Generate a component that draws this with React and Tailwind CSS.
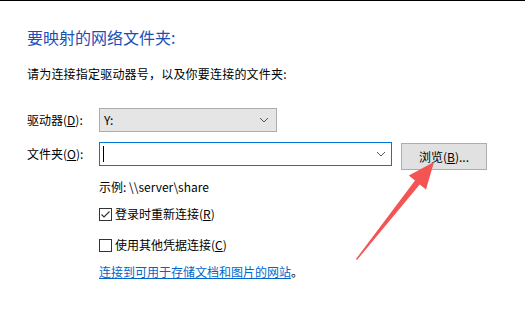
import React from 'react';

const Chevron = () => (
  <svg width="10" height="6" viewBox="0 0 10 6" className="shrink-0">
    <path d="M1 1 L5 5 L9 1" fill="none" stroke="#555" strokeWidth="1" />
  </svg>
);

const Checkbox = ({ checked }) => (
  <svg width="13" height="13" viewBox="0 0 13 13" className="shrink-0">
    <rect x="0.5" y="0.5" width="12" height="12" fill="#fff" stroke="#333" />
    {checked && (
      <path d="M2.5 6.5 L5 9 L10.5 3.5" fill="none" stroke="#333" strokeWidth="1.2" />
    )}
  </svg>
);

// red annotation arrow pointing at the browse button
const Arrow = () => (
  <svg
    width="525"
    height="321"
    viewBox="0 0 525 321"
    className="absolute left-0 top-0 pointer-events-none"
  >
    <polygon
      points="356,258 415,179.6 408.8,174.6 434,161 426,188.4 419.7,183.4 357,259"
      fill="#f45454"
    />
  </svg>
);

export default function App() {
  return (
    <div
      className="relative w-[525px] h-[321px] overflow-hidden bg-white border-t border-black text-[#000] text-[12px]"
      style={{ fontFamily: '"Microsoft YaHei", "Noto Sans CJK SC", "Noto Sans", sans-serif' }}
    >
      <div className="flex flex-col px-[27px]">
        <h1 className="mt-[26px] text-[16px] leading-[20px] text-[#1c4fb5]">要映射的网络文件夹:</h1>
        <p className="mt-[19px] leading-[16px] tracking-[0.2px]">请为连接指定驱动器号，以及你要连接的文件夹:</p>

        <div className="mt-[26px] flex items-center">
          <span className="w-[72px] leading-[16px]">
            驱动器(<u>D</u>):
          </span>
          <div className="flex h-[24px] w-[178px] items-center justify-between border border-[#adadad] bg-[#e5e5e5] pl-[4px] pr-[7px]">
            <span>Y:</span>
            <Chevron />
          </div>
        </div>

        <div className="mt-[10px] flex items-start">
          <span className="w-[72px] h-[24px] leading-[24px]">
            文件夹(<u>O</u>):
          </span>
          <div className="flex h-[24px] w-[293px] items-center justify-between border border-[#0078d7] bg-white pl-[3px] pr-[5px]">
            <span className="h-[16px] w-px bg-black" />
            <Chevron />
          </div>
          <button className="ml-[9px] mt-px flex h-[27px] w-[86px] items-center justify-center border border-[#adadad] bg-[#e1e1e1]">
            浏览(<u>B</u>)...
          </button>
        </div>

        <div className="ml-[72px] flex flex-col">
          <p className="mt-[9px] leading-[16px]">示例: \\server\share</p>
          <label className="mt-[11px] flex h-[16px] items-center gap-[3px]">
            <Checkbox checked />
            <span>
              登录时重新连接(<u>R</u>)
            </span>
          </label>
          <label className="mt-[15px] flex h-[16px] items-center gap-[3px]">
            <Checkbox />
            <span>
              使用其他凭据连接(<u>C</u>)
            </span>
          </label>
          <p className="mt-[11px] leading-[16px]">
            <a className="text-[#0066cc] underline">连接到可用于存储文档和图片的网站</a>。
          </p>
        </div>
      </div>
      <Arrow />
    </div>
  );
}
